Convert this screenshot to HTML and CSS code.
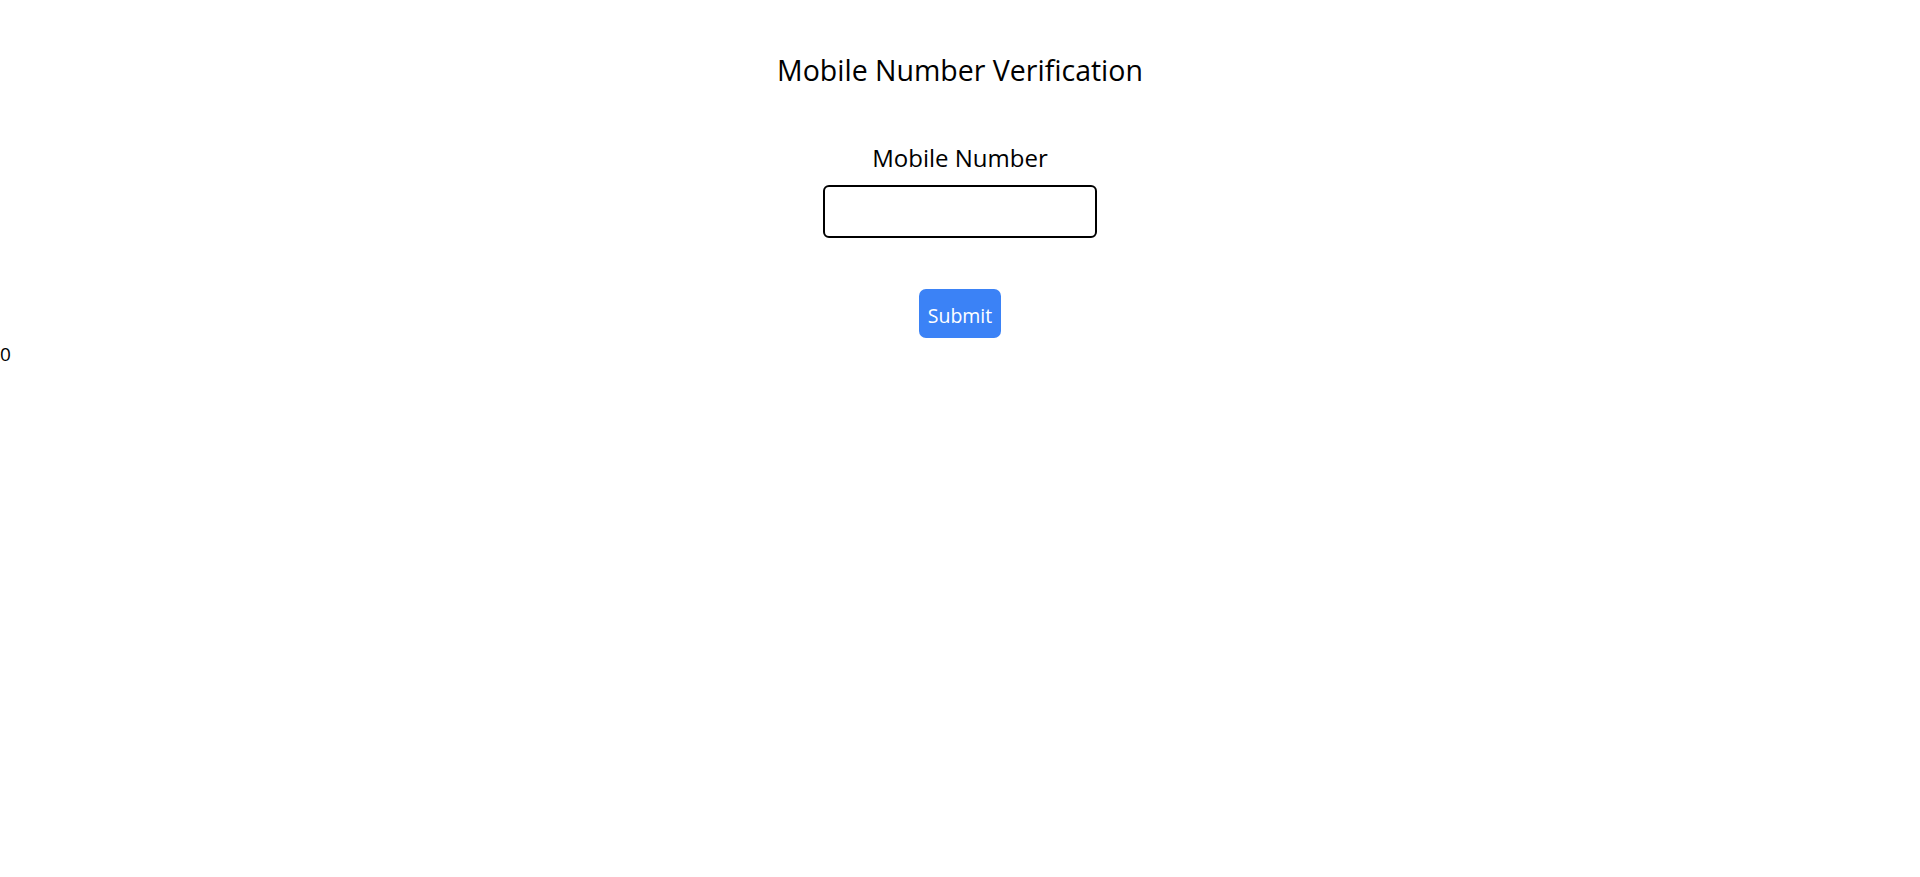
FILE: index.html
```html
<!DOCTYPE html>
<html>
<head>
<meta charset="utf-8">
<link rel="stylesheet" href="styles.css">
</head>
<body>
<div class="page">
  <h1 class="title">Mobile Number Verification</h1>
  <form class="form">
    <label class="label" for="mobile">Mobile Number</label>
    <input class="input" id="mobile" type="text">
    <button class="submit" type="button">Submit</button>
  </form>
</div>
<div class="count">0</div>
</body>
</html>
```

FILE: styles.css
```css
html, body {
  margin: 0;
  padding: 0;
  background: #ffffff;
  color: #000000;
  font-family: "Open Sans", "Noto Sans", sans-serif;
}
.page {
  display: flex;
  flex-direction: column;
  align-items: center;
}
.title {
  margin: 48px 0 0 0;
  font-size: 28.5px;
  font-weight: 400;
  line-height: 44px;
}
.form {
  display: flex;
  flex-direction: column;
  align-items: center;
  margin-top: 50px;
}
.label {
  font-size: 24px;
  line-height: 32px;
}
.input {
  box-sizing: border-box;
  width: 274px;
  height: 53px;
  margin-top: 11px;
  border: 2px solid #000;
  border-radius: 6px;
  font-size: 20px;
  padding: 0 10px;
  font-family: inherit;
}
.submit {
  box-sizing: border-box;
  margin-top: 51px;
  width: 82px;
  height: 49px;
  border: none;
  border-radius: 7px;
  background: #3b82f6;
  color: #ffffff;
  font-family: inherit;
  font-size: 19.5px;
  padding: 4px 0 0 0;
}
.count {
  font-size: 19px;
  line-height: 26px;
  margin-top: 3px;
}
```
